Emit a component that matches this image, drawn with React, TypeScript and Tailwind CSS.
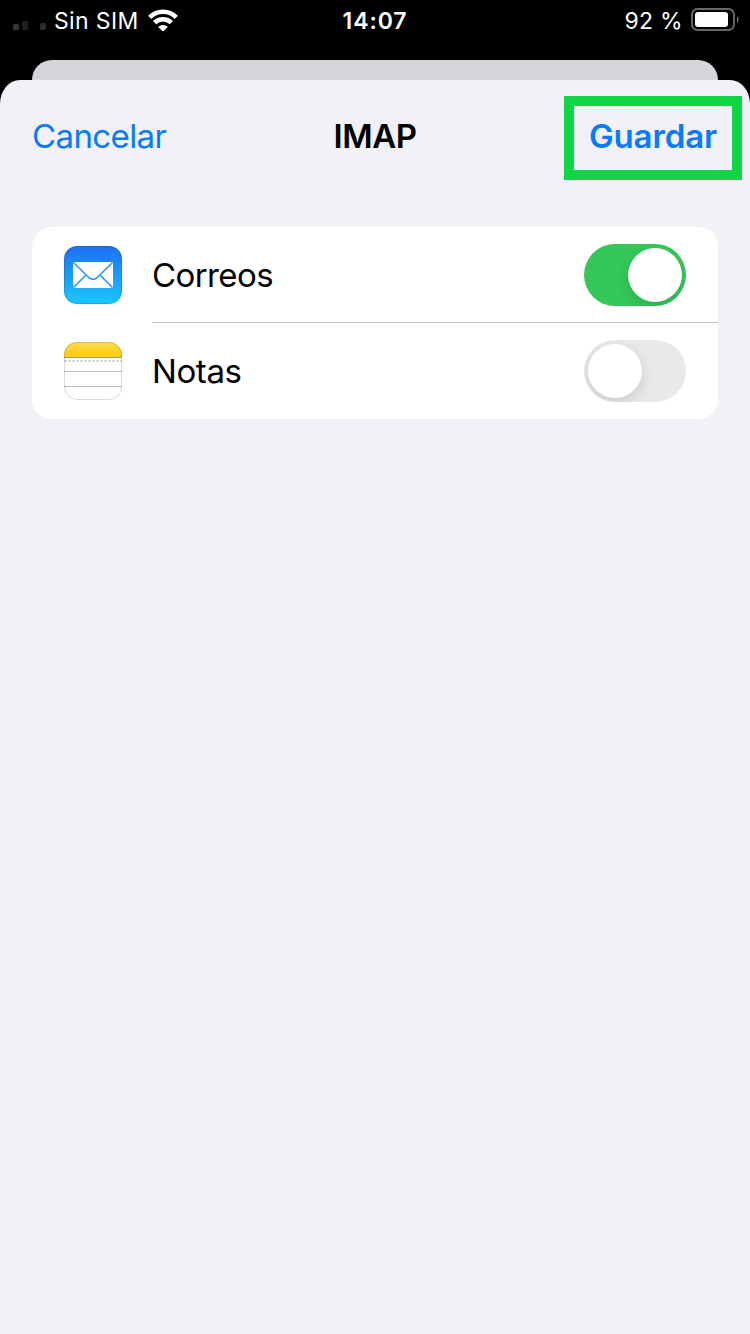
import React, { useState } from 'react';
import clsx from 'clsx';

interface ToggleProps {
  checked: boolean;
  label: string;
  onChange: () => void;
}

const SignalIcon = () => (
  <svg className="mt-[10px]" width="34" height="12" viewBox="0 0 34 12" fill="#2c2c2c">
    <rect x="0" y="5" width="6" height="6" rx="1.5" fill="#363636" />
    <rect x="9" y="2" width="6" height="9" rx="1.5" fill="#1f1f1f" />
    <rect x="27" y="4" width="6" height="7" rx="1.5" />
  </svg>
);

const WifiIcon = () => (
  <svg width="30" height="23" viewBox="0 0 30 23" fill="none" stroke="#fff" strokeWidth="4.5">
    <path d="M1.7 8.3C9 1 21 1 28.3 8.3" />
    <path d="M6.6 13.6C11.3 9 18.7 9 23.4 13.6" />
    <path d="M15 22.4L10.2 18C12.8 15.2 17.2 15.2 19.8 18Z" fill="#fff" stroke="none" />
  </svg>
);

const BatteryIcon = () => (
  <svg width="48" height="24" viewBox="0 0 48 24">
    <rect x="1" y="1" width="42" height="21" rx="5.5" fill="none" stroke="#666" strokeWidth="2" />
    <rect x="4" y="4" width="33" height="15" rx="3" fill="#fff" />
    <path d="M46 8.2C48 9.3 48 13.7 46 14.8Z" fill="#777" />
  </svg>
);

const MailIcon = () => (
  <svg width="58" height="58" viewBox="0 0 58 58">
    <defs>
      <linearGradient id="mail-bg" x1="0" y1="0" x2="0" y2="1">
        <stop offset="0" stopColor="#1d6ff2" />
        <stop offset="1" stopColor="#1ac8fd" />
      </linearGradient>
    </defs>
    <rect width="58" height="58" rx="13" fill="url(#mail-bg)" />
    <rect x="0.5" y="0.5" width="57" height="57" rx="12.5" fill="none" stroke="#000" strokeOpacity="0.12" />
    <rect x="9" y="16" width="40" height="26" rx="1" fill="#fff" />
    <g fill="none" stroke="#2f97f2" strokeWidth="1.6">
      <path d="M9.5 16.5L24.2 31C27.2 34.2 30.8 34.2 33.8 31L48.5 16.5" />
      <path d="M9.5 41.5L22 29M48.5 41.5L36 29" />
    </g>
  </svg>
);

const NotesIcon = () => (
  <svg width="58" height="58" viewBox="0 0 58 58">
    <defs>
      <linearGradient id="notes-top" x1="0" y1="0" x2="0" y2="1">
        <stop offset="0" stopColor="#ffdc51" />
        <stop offset="1" stopColor="#fccb0a" />
      </linearGradient>
      <clipPath id="notes-shape">
        <rect width="58" height="58" rx="13" />
      </clipPath>
    </defs>
    <g clipPath="url(#notes-shape)">
      <rect width="58" height="58" fill="#fff" />
      <rect width="58" height="15" fill="url(#notes-top)" />
      <path d="M0 15.5H58" stroke="#a69d80" strokeWidth="1.2" />
      <path d="M0.5 19H58" stroke="#c6c6c6" strokeWidth="2" strokeDasharray="2 2" />
      <path d="M0 29.5H58M0 44.5H58" stroke="#bdbdbd" />
    </g>
    <rect x="0.5" y="0.5" width="57" height="57" rx="12.5" fill="none" stroke="#000" strokeOpacity="0.14" />
  </svg>
);

const Toggle: React.FC<ToggleProps> = ({ checked, label, onChange }) => (
  <button
    role="switch"
    aria-checked={checked}
    aria-label={label}
    onClick={onChange}
    className={clsx(
      'flex h-[62px] w-[102px] shrink-0 items-center overflow-hidden rounded-full p-1',
      checked ? 'justify-end bg-[#35c759]' : 'justify-start bg-[#e9e9eb]'
    )}
  >
    <span className="size-[54px] rounded-full bg-white shadow-[0_5px_14px_rgba(0,0,0,0.13)]" />
  </button>
);

const StatusBar = () => (
  <div className="grid h-10 grid-cols-[1fr_auto_1fr] items-center pl-[13px] pr-[11px] text-[23px] leading-none text-white">
    <div className="flex items-center">
      <SignalIcon />
      <span className="ml-[7px] pt-0.5 tracking-[0.35px]">Sin SIM</span>
      <span className="ml-[9px]"><WifiIcon /></span>
    </div>
    <span className="pr-0.5 pt-0.5 font-semibold tracking-[0.9px]">14:07</span>
    <div className="flex items-center justify-end gap-2">
      <span className="pt-0.5 tracking-[0.3px]">92 %</span>
      <BatteryIcon />
    </div>
  </div>
);

export default function App() {
  const [mail, setMail] = useState(true);
  const [notes, setNotes] = useState(false);

  return (
    <div className="flex h-[1334px] w-[750px] flex-col overflow-hidden bg-black font-['Inter',sans-serif]">
      <StatusBar />
      <div className="mx-8 mt-5 h-5 shrink-0 rounded-t-[20px] bg-[#d5d4d9]" />
      <main className="flex-1 rounded-t-[20px_24px] bg-[#f2f1f8] pt-4">
        <header className="grid h-[84px] grid-cols-[1fr_auto_1fr] items-center text-[33px] leading-none">
          <button className="justify-self-start pb-1 pl-8 tracking-[-0.6px] text-[#087aff]">Cancelar</button>
          <h1 className="pb-1 font-semibold tracking-[-0.5px] text-black">IMAP</h1>
          <div className="mr-2 flex h-[84px] w-[178px] items-center justify-center justify-self-end border-[10px] border-[#10d545]">
            <button className="pb-1 font-semibold tracking-[-0.1px] text-[#087aff]">Guardar</button>
          </div>
        </header>

        <section className="mx-8 mt-[47px] overflow-hidden rounded-[20px] bg-white text-[33px] leading-none tracking-[-0.6px] text-black">
          <div className="flex h-24 items-center pl-8">
            <MailIcon />
            <div className="ml-[30px] flex h-full flex-1 items-center justify-between border-b border-[#c3c3c5] pr-8">
              <span className="pt-0.5">Correos</span>
              <Toggle checked={mail} label="Correos" onChange={() => setMail(!mail)} />
            </div>
          </div>
          <div className="flex h-24 items-center pl-8">
            <NotesIcon />
            <div className="ml-[30px] flex h-full flex-1 items-center justify-between pr-8">
              <span className="tracking-[-0.4px]">Notas</span>
              <Toggle checked={notes} label="Notas" onChange={() => setNotes(!notes)} />
            </div>
          </div>
        </section>
      </main>
    </div>
  );
}
